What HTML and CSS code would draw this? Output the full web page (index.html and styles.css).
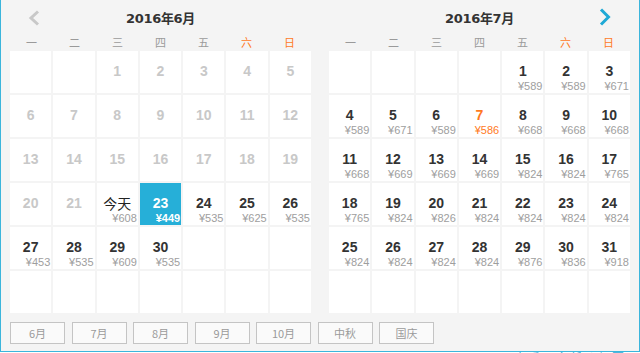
FILE: index.html
```html
<!DOCTYPE html>
<html lang="zh-CN">
<head>
<meta charset="utf-8">
<title>日历</title>
<link rel="stylesheet" href="styles.css">
</head>
<body>
<div class="frame">
  <div class="months">
    <section class="month">
      <div class="head">
        <span class="arrow prev"><svg width="12" height="16" viewBox="0 0 12 16"><path d="M10 1.5 L3 8 L10 14.5" fill="none" stroke="#c8c8c8" stroke-width="3"/></svg></span>
        <h2 class="title">2016年6月</h2>
        <span></span>
      </div>
      <div class="weekdays"><span>一</span><span>二</span><span>三</span><span>四</span><span>五</span><span class="we">六</span><span class="we">日</span></div>
      <div class="grid">
        <div class="day"></div><div class="day"></div>
        <div class="day off"><span class="num">1</span></div>
        <div class="day off"><span class="num">2</span></div>
        <div class="day off"><span class="num">3</span></div>
        <div class="day off"><span class="num">4</span></div>
        <div class="day off"><span class="num">5</span></div>
        <div class="day off"><span class="num">6</span></div>
        <div class="day off"><span class="num">7</span></div>
        <div class="day off"><span class="num">8</span></div>
        <div class="day off"><span class="num">9</span></div>
        <div class="day off"><span class="num">10</span></div>
        <div class="day off"><span class="num">11</span></div>
        <div class="day off"><span class="num">12</span></div>
        <div class="day off"><span class="num">13</span></div>
        <div class="day off"><span class="num">14</span></div>
        <div class="day off"><span class="num">15</span></div>
        <div class="day off"><span class="num">16</span></div>
        <div class="day off"><span class="num">17</span></div>
        <div class="day off"><span class="num">18</span></div>
        <div class="day off"><span class="num">19</span></div>
        <div class="day off"><span class="num">20</span></div>
        <div class="day off"><span class="num">21</span></div>
        <div class="day today"><span class="num">今天</span><span class="price">¥608</span></div>
        <div class="day sel"><span class="num">23</span><span class="price">¥449</span></div>
        <div class="day"><span class="num">24</span><span class="price">¥535</span></div>
        <div class="day"><span class="num">25</span><span class="price">¥625</span></div>
        <div class="day"><span class="num">26</span><span class="price">¥535</span></div>
        <div class="day"><span class="num">27</span><span class="price">¥453</span></div>
        <div class="day"><span class="num">28</span><span class="price">¥535</span></div>
        <div class="day"><span class="num">29</span><span class="price">¥609</span></div>
        <div class="day"><span class="num">30</span><span class="price">¥535</span></div>
        <div class="day"></div><div class="day"></div><div class="day"></div>
        <div class="day"></div><div class="day"></div><div class="day"></div><div class="day"></div><div class="day"></div><div class="day"></div><div class="day"></div>
      </div>
    </section>
    <section class="month">
      <div class="head">
        <span></span>
        <h2 class="title">2016年7月</h2>
        <span class="arrow next"><svg width="12" height="18" viewBox="0 0 12 18"><path d="M2 1.5 L9.5 9 L2 16.5" fill="none" stroke="#1ea9d6" stroke-width="3"/></svg></span>
      </div>
      <div class="weekdays"><span>一</span><span>二</span><span>三</span><span>四</span><span>五</span><span class="we">六</span><span class="we">日</span></div>
      <div class="grid">
        <div class="day"></div><div class="day"></div><div class="day"></div><div class="day"></div>
        <div class="day"><span class="num">1</span><span class="price">¥589</span></div>
        <div class="day"><span class="num">2</span><span class="price">¥589</span></div>
        <div class="day"><span class="num">3</span><span class="price">¥671</span></div>
        <div class="day"><span class="num">4</span><span class="price">¥589</span></div>
        <div class="day"><span class="num">5</span><span class="price">¥671</span></div>
        <div class="day"><span class="num">6</span><span class="price">¥589</span></div>
        <div class="day low"><span class="num">7</span><span class="price">¥586</span></div>
        <div class="day"><span class="num">8</span><span class="price">¥668</span></div>
        <div class="day"><span class="num">9</span><span class="price">¥668</span></div>
        <div class="day"><span class="num">10</span><span class="price">¥668</span></div>
        <div class="day"><span class="num">11</span><span class="price">¥668</span></div>
        <div class="day"><span class="num">12</span><span class="price">¥669</span></div>
        <div class="day"><span class="num">13</span><span class="price">¥669</span></div>
        <div class="day"><span class="num">14</span><span class="price">¥669</span></div>
        <div class="day"><span class="num">15</span><span class="price">¥824</span></div>
        <div class="day"><span class="num">16</span><span class="price">¥824</span></div>
        <div class="day"><span class="num">17</span><span class="price">¥765</span></div>
        <div class="day"><span class="num">18</span><span class="price">¥765</span></div>
        <div class="day"><span class="num">19</span><span class="price">¥824</span></div>
        <div class="day"><span class="num">20</span><span class="price">¥826</span></div>
        <div class="day"><span class="num">21</span><span class="price">¥824</span></div>
        <div class="day"><span class="num">22</span><span class="price">¥824</span></div>
        <div class="day"><span class="num">23</span><span class="price">¥824</span></div>
        <div class="day"><span class="num">24</span><span class="price">¥824</span></div>
        <div class="day"><span class="num">25</span><span class="price">¥824</span></div>
        <div class="day"><span class="num">26</span><span class="price">¥824</span></div>
        <div class="day"><span class="num">27</span><span class="price">¥824</span></div>
        <div class="day"><span class="num">28</span><span class="price">¥824</span></div>
        <div class="day"><span class="num">29</span><span class="price">¥876</span></div>
        <div class="day"><span class="num">30</span><span class="price">¥836</span></div>
        <div class="day"><span class="num">31</span><span class="price">¥918</span></div>
        <div class="day"></div><div class="day"></div><div class="day"></div><div class="day"></div><div class="day"></div><div class="day"></div><div class="day"></div>
      </div>
    </section>
  </div>
  <div class="quick">
    <span class="btn">6月</span><span class="btn">7月</span><span class="btn">8月</span><span class="btn">9月</span><span class="btn">10月</span><span class="btn">中秋</span><span class="btn">国庆</span>
  </div>
</div>
<div class="below">查看更多低价机票</div>
</body>
</html>
```

FILE: styles.css
```css
html, body {
  margin: 0;
  padding: 0;
  background: #ffffff;
}
body {
  font-family: "Noto Sans CJK SC", "Liberation Sans", sans-serif;
  overflow: hidden;
}
.frame {
  box-sizing: border-box;
  height: 352px;
  width: 640px;
  background: #f4f4f4;
  border: 1px solid #3bb5dc;
  border-top: none;
  padding: 0 9px 7px 9px;
}
.months {
  display: flex;
  gap: 18px;
}
.month {
  width: 301px;
}
.head {
  box-sizing: border-box;
  height: 33px;
  padding-top: 2px;
  display: grid;
  grid-template-columns: 1fr auto 1fr;
  align-items: center;
}
.title {
  margin: 0;
  font-family: "DejaVu Sans", "Noto Sans CJK SC", sans-serif;
  font-weight: bold;
  font-size: 13px;
  color: #333333;
  letter-spacing: -0.3px;
}
.arrow {
  display: flex;
}
.arrow svg { display: block; }
.prev {
  justify-self: start;
  margin-left: 18px;
}
.next {
  justify-self: end;
  margin-right: 19px;
  margin-top: -1px;
}
.weekdays {
  height: 18px;
  display: grid;
  grid-template-columns: repeat(7, 1fr);
  font-size: 11px;
  line-height: 18px;
  color: #9a9a9a;
  text-align: center;
}
.weekdays .we {
  color: #ff7a1e;
}
.grid {
  display: grid;
  grid-template-columns: repeat(7, 1fr);
  grid-auto-rows: 42px;
  gap: 2px;
}
.day {
  background: #ffffff;
  display: flex;
  flex-direction: column;
  box-sizing: border-box;
  padding-top: 13px;
  min-width: 0;
}
.num {
  text-align: center;
  font-family: "Liberation Sans", Arial, sans-serif;
  font-weight: bold;
  font-size: 14px;
  line-height: 15px;
  color: #333333;
}
.price {
  margin-top: 1px;
  text-align: right;
  padding-right: 1px;
  font-family: "Liberation Sans", Arial, sans-serif;
  font-size: 11px;
  line-height: 12px;
  color: #9e9e9e;
  white-space: nowrap;
}
.off .num {
  color: #c8c8c8;
}
.today .num {
  font-family: "Noto Sans CJK SC", sans-serif;
  font-weight: normal;
  font-size: 14px;
  color: #222222;
}
.sel {
  background: #26afd8;
}
.sel .num,
.sel .price {
  color: #ffffff;
  font-weight: bold;
}
.low .num,
.low .price {
  color: #ff7a1e;
}
.quick {
  margin-top: 9px;
  display: flex;
  gap: 6.5px;
}
.btn {
  box-sizing: border-box;
  width: 55px;
  height: 22px;
  border: 1px solid #c4c4c4;
  background: #fafafa;
  color: #9a9a9a;
  font-size: 11px;
  line-height: 20px;
  text-align: center;
}
.below {
  height: 14px;
  padding-left: 514px;
  color: #1ea9d6;
  font-size: 12px;
  line-height: 12px;
  letter-spacing: 2px;
  white-space: nowrap;
}
```
